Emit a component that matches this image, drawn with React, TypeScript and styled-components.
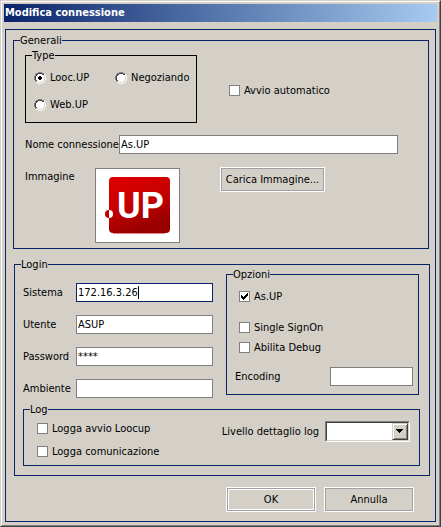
import React, { useState } from "react";
import styled, { createGlobalStyle, css } from "styled-components";

const face = "#d4d0c8";
const navy = "#0a246a";
const gray = "#808080";
const dark = "#404040";

const GlobalStyle = createGlobalStyle`
  * { box-sizing: border-box; }
  body { margin: 0; background: ${face}; }
  body, input, button, select {
    font-family: "DejaVu Sans Condensed", Tahoma, "DejaVu Sans", sans-serif;
    font-size: 11px;
    line-height: 13px;
    color: #000;
  }
  label { white-space: nowrap; }
`;

const Window = styled.main`
  background: ${face};
  border: 1px solid;
  border-color: ${face} ${dark} ${dark} ${face};
`;

const Frame = styled.div`
  border: 1px solid;
  border-color: #fff ${gray} ${gray} #fff;
  padding: 2px;
`;

const TitleBar = styled.header`
  height: 18px;
  padding-left: 1px;
  background: linear-gradient(to right, ${navy}, #a6caf0);
`;

const Title = styled.h1`
  margin: 0;
  font-size: 11px;
  line-height: 18px;
  font-weight: bold;
  color: #fff;
`;

const Panel = styled.form`
  margin: 7px 1px 1px;
  padding: 4px 5px 9px 7px;
  border: 1px solid ${navy};
`;

const Group = styled.fieldset<{ $color?: string }>`
  min-width: 0;
  margin: 0;
  padding: 0;
  border: 1px solid ${(p) => p.$color ?? navy};
`;

const Legend = styled.legend`
  margin-left: 6px;
  padding: 0;
  line-height: 13px;
`;

const GeneralGroup = styled(Group)`
  margin-right: 1px;
  padding-bottom: 5px;
`;

const TypeRow = styled.div`
  display: flex;
  align-items: center;
  gap: 32px;
  padding: 2px 11px 0;
`;

const TypeGroup = styled(Group)`
  width: 172px;
`;

const RadioGrid = styled.div`
  display: grid;
  grid-template-columns: 81px 1fr;
  grid-auto-rows: 27px;
  align-items: center;
  padding: 2px 0 4px 8px;
`;

const AutoStart = styled.div`
  padding-top: 8px;
`;

const NameRow = styled.div`
  display: grid;
  grid-template-columns: 94px 1fr;
  align-items: center;
  margin-top: 12px;
  padding: 0 30px 0 11px;
`;

const ImageRow = styled.div`
  display: flex;
  align-items: start;
  margin-top: 13px;
  padding-left: 11px;
`;

const ImageLabel = styled.span`
  width: 70px;
  padding-top: 3px;
`;

const Picture = styled.div`
  width: 85px;
  height: 75px;
  margin: 1px 40px 0 0;
  border: 1px solid ${gray};
  background: #fff;
  svg { display: block; }
`;

const LoginGroup = styled(Group)`
  margin: 9px 0 0 1px;
`;

const LoginBody = styled.div`
  padding: 0 9px 9px 8px;
`;

const LoginColumns = styled.div`
  display: grid;
  grid-template-columns: 190fr 193fr;
  gap: 13px;
  align-items: start;
  margin-top: -3px;
  padding-right: 1px;
`;

const Fields = styled.div`
  display: grid;
  grid-template-columns: 53px 1fr;
  align-items: center;
  row-gap: 13px;
  padding-top: 15px;
`;

const fieldBox = css`
  width: 100%;
  min-width: 0;
  height: 19px;
  padding: 0 1px;
  border: 1px solid ${gray};
  border-radius: 0;
  background: #fff;
  outline: none;
`;

const TextBox = styled.input<{ $active?: boolean }>`
  ${fieldBox}
  border-color: ${(p) => (p.$active ? navy : gray)};
`;

const CaretField = styled.div`
  position: relative;
  display: flex;
`;

const Caret = styled.span`
  position: absolute;
  left: 62px;
  top: 3px;
  width: 1px;
  height: 13px;
  background: #000;
`;

const OptionList = styled.div`
  display: grid;
  justify-items: start;
  padding: 9px 12px 0;
`;

const OptionPair = styled.div`
  display: grid;
  gap: 7px;
  margin-top: 18px;
`;

const EncodingRow = styled.div`
  display: grid;
  grid-template-columns: 95px 1fr;
  align-items: center;
  margin-top: 13px;
  padding: 0 5px 8px 8px;
`;

const LogGroup = styled(Group)`
  margin-top: 5px;
`;

const LogRow = styled.div`
  display: flex;
  justify-content: space-between;
  align-items: start;
  padding: 5px 9px 7px 13px;
`;

const LogChecks = styled.div`
  display: grid;
  gap: 10px;
  padding-top: 1px;
`;

const LevelField = styled.div`
  display: flex;
  align-items: center;
  gap: 6px;
`;

const Choice = styled.label`
  display: flex;
  align-items: center;
  gap: 4px;
  height: 13px;
`;

const Mark = styled.span<{ $size: number }>`
  position: relative;
  flex: none;
  width: ${(p) => p.$size}px;
  height: ${(p) => p.$size}px;
  input {
    appearance: none;
    display: block;
    width: 100%;
    height: 100%;
    margin: 0;
    outline: none;
  }
  input[type="checkbox"] {
    border: 1px solid ${gray};
    background: #fff;
  }
  svg {
    position: absolute;
    inset: 0;
    pointer-events: none;
  }
`;

const Combo = styled.div`
  position: relative;
  width: 85px;
  height: 21px;
  border: 1px solid;
  border-color: ${gray} #fff #fff ${gray};
`;

const Select = styled.select`
  appearance: none;
  display: block;
  width: 100%;
  height: 19px;
  padding: 0 18px 0 2px;
  border: 1px solid;
  border-color: ${dark} ${face} ${face} ${dark};
  border-radius: 0;
  background: #fff;
  outline: none;
`;

const ComboArrow = styled.span`
  position: absolute;
  top: 1px;
  right: 1px;
  width: 16px;
  height: 17px;
  border: 1px solid;
  border-color: ${face} ${dark} ${dark} ${face};
  background: ${face};
  box-shadow: inset 1px 1px #fff, inset -1px -1px ${gray};
  pointer-events: none;
  svg { display: block; margin: 5px 0 0 3px; }
`;

const Button = styled.button<{ $default?: boolean; $width?: number }>`
  width: ${(p) => p.$width ?? 90}px;
  height: 25px;
  padding: 0;
  border: 1px solid #fff;
  border-radius: 0;
  background: ${face};
  box-shadow: inset 0 0 0 1px #a0a0a4${(p) => (p.$default ? ", inset 0 0 0 2px #fff" : "")};
  white-space: nowrap;
`;

const Actions = styled.footer`
  display: flex;
  justify-content: flex-end;
  gap: 8px;
  margin-top: 11px;
  padding-right: 16px;
`;

function Check({ label, checked = false }: { label: string; checked?: boolean }) {
  const [on, setOn] = useState(checked);
  return (
    <Choice>
      <Mark $size={11}>
        <input type="checkbox" checked={on} onChange={(e) => setOn(e.target.checked)} />
        {on && (
          <svg width="11" height="11" shapeRendering="crispEdges" aria-hidden="true">
            <path d="M2 4h1v3h-1zM3 5h1v3h-1zM4 6h1v3h-1zM5 5h1v3h-1zM6 4h1v3h-1zM7 3h1v3h-1zM8 2h1v3h-1z" />
          </svg>
        )}
      </Mark>
      {label}
    </Choice>
  );
}

interface RadioProps {
  label: string;
  value: string;
  current: string;
  onPick: (value: string) => void;
}

function Radio({ label, value, current, onPick }: RadioProps) {
  return (
    <Choice>
      <Mark $size={12}>
        <input type="radio" name="type" value={value} checked={current === value} onChange={() => onPick(value)} />
        <svg width="12" height="12" shapeRendering="crispEdges" aria-hidden="true">
          <path fill="#fff" d="M4 1h4v1h2v2h1v4h-1v2h-2v1h-4v-1h-2v-2h-1v-4h1v-2h2z" />
          <path fill={gray} d="M4 0h4v1h-4zM2 1h2v1h-2zM8 1h2v1h-2zM1 2h1v2h-1zM0 4h1v4h-1zM1 8h1v2h-1z" />
          <path fill={dark} d="M4 1h4v1h-4zM2 2h2v1h-2zM8 2h2v1h-2zM2 3h1v1h-1zM1 4h1v4h-1zM2 8h1v1h-1z" />
          <path fill={face} d="M10 4h1v4h-1zM9 8h1v1h-1zM8 9h2v1h-2zM4 10h4v1h-4zM2 9h2v1h-2z" />
          <path fill="#fff" d="M11 4h1v4h-1zM10 2h1v2h-1zM10 8h1v2h-1zM8 10h2v1h-2zM4 11h4v1h-4zM2 10h2v1h-2z" />
          {current === value && <path d="M5 4h2v1h1v2h-1v1h-2v-1h-1v-2h1z" />}
        </svg>
      </Mark>
      {label}
    </Choice>
  );
}

const LogoText = styled.text`
  font-family: Roboto, Arial, sans-serif;
  font-size: 36px;
  font-weight: bold;
  fill: #fff;
`;

function Logo() {
  return (
    <svg width="83" height="73" viewBox="0 0 83 73" aria-hidden="true">
      <defs>
        <linearGradient id="red" x1="0" y1="0" x2="0.4" y2="1">
          <stop offset="0" stopColor="#e20000" />
          <stop offset="0.5" stopColor="#c80000" />
          <stop offset="1" stopColor="#980000" />
        </linearGradient>
      </defs>
      <rect x="17" y="64" width="52" height="1" fill="#d88" />
      <rect x="13" y="8" width="61" height="56" rx="4" fill="url(#red)" />
      <path fill="#c00000" d="M13 41a4 4 0 0 0 0 8z" />
      <path fill="#fff" d="M13 41a4 4 0 0 1 0 8z" />
      <LogoText x="21" y="49">UP</LogoText>
    </svg>
  );
}

export default function App() {
  const [type, setType] = useState("looc");
  return (
    <>
      <GlobalStyle />
      <Window>
        <Frame>
          <TitleBar>
            <Title>Modifica connessione</Title>
          </TitleBar>
          <Panel onSubmit={(e) => e.preventDefault()}>
            <GeneralGroup>
              <Legend>Generali</Legend>
              <TypeRow>
                <TypeGroup $color="#000">
                  <Legend>Type</Legend>
                  <RadioGrid>
                    <Radio label="Looc.UP" value="looc" current={type} onPick={setType} />
                    <Radio label="Negoziando" value="negoziando" current={type} onPick={setType} />
                    <Radio label="Web.UP" value="web" current={type} onPick={setType} />
                  </RadioGrid>
                </TypeGroup>
                <AutoStart>
                  <Check label="Avvio automatico" />
                </AutoStart>
              </TypeRow>
              <NameRow>
                <label htmlFor="nome">Nome connessione</label>
                <TextBox id="nome" defaultValue="As.UP" />
              </NameRow>
              <ImageRow>
                <ImageLabel>Immagine</ImageLabel>
                <Picture>
                  <Logo />
                </Picture>
                <Button type="button" $width={105}>Carica Immagine...</Button>
              </ImageRow>
            </GeneralGroup>
            <LoginGroup>
              <Legend>Login</Legend>
              <LoginBody>
                <LoginColumns>
                  <Fields>
                    <label htmlFor="sistema">Sistema</label>
                    <CaretField>
                      <TextBox id="sistema" defaultValue="172.16.3.26" $active />
                      <Caret />
                    </CaretField>
                    <label htmlFor="utente">Utente</label>
                    <TextBox id="utente" defaultValue="ASUP" />
                    <label htmlFor="password">Password</label>
                    <TextBox id="password" defaultValue="****" autoComplete="off" />
                    <label htmlFor="ambiente">Ambiente</label>
                    <TextBox id="ambiente" />
                  </Fields>
                  <Group>
                    <Legend>Opzioni</Legend>
                    <OptionList>
                      <Check label="As.UP" checked />
                      <OptionPair>
                        <Check label="Single SignOn" />
                        <Check label="Abilita Debug" />
                      </OptionPair>
                    </OptionList>
                    <EncodingRow>
                      <label htmlFor="encoding">Encoding</label>
                      <TextBox id="encoding" />
                    </EncodingRow>
                  </Group>
                </LoginColumns>
                <LogGroup>
                  <Legend>Log</Legend>
                  <LogRow>
                    <LogChecks>
                      <Check label="Logga avvio Loocup" />
                      <Check label="Logga comunicazione" />
                    </LogChecks>
                    <LevelField>
                      <label htmlFor="livello">Livello dettaglio log</label>
                      <Combo>
                        <Select id="livello" defaultValue="">
                          <option value="" />
                        </Select>
                        <ComboArrow>
                          <svg width="7" height="4" shapeRendering="crispEdges" aria-hidden="true">
                            <path d="M0 0h7v1h-1v1h-1v1h-1v1h-1v-1h-1v-1h-1v-1h-1z" />
                          </svg>
                        </ComboArrow>
                      </Combo>
                    </LevelField>
                  </LogRow>
                </LogGroup>
              </LoginBody>
            </LoginGroup>
            <Actions>
              <Button type="submit" $default>OK</Button>
              <Button type="button">Annulla</Button>
            </Actions>
          </Panel>
        </Frame>
      </Window>
    </>
  );
}
